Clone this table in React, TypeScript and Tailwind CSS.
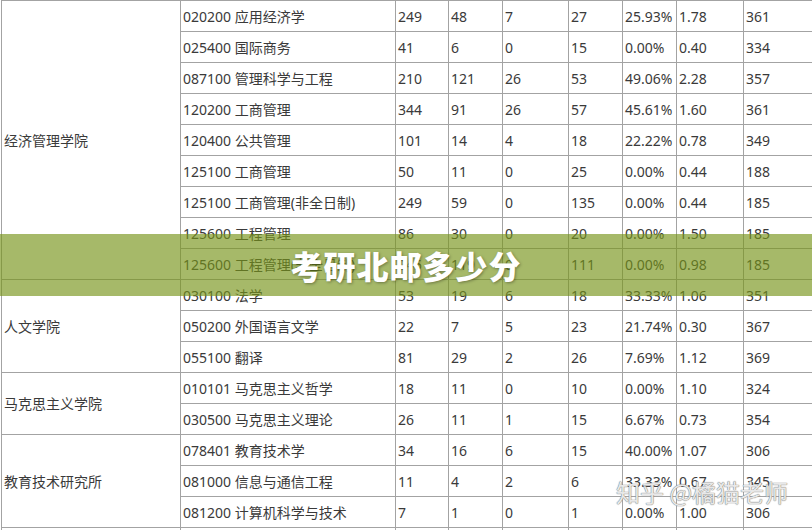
const rows: { group?: [string, number]; name: string; v: string[] }[] = [
  { group: ["经济管理学院", 9], name: "020200 应用经济学", v: ["249", "48", "7", "27", "25.93%", "1.78", "361"] },
  { name: "025400 国际商务", v: ["41", "6", "0", "15", "0.00%", "0.40", "334"] },
  { name: "087100 管理科学与工程", v: ["210", "121", "26", "53", "49.06%", "2.28", "357"] },
  { name: "120200 工商管理", v: ["344", "91", "26", "57", "45.61%", "1.60", "361"] },
  { name: "120400 公共管理", v: ["101", "14", "4", "18", "22.22%", "0.78", "349"] },
  { name: "125100 工商管理", v: ["50", "11", "0", "25", "0.00%", "0.44", "188"] },
  { name: "125100 工商管理(非全日制)", v: ["249", "59", "0", "135", "0.00%", "0.44", "185"] },
  { name: "125600 工程管理", v: ["86", "30", "0", "20", "0.00%", "1.50", "185"] },
  { name: "125600 工程管理(非全日制)", v: ["245", "119", "0", "111", "0.00%", "0.98", "185"] },
  { group: ["人文学院", 3], name: "030100 法学", v: ["53", "19", "6", "18", "33.33%", "1.06", "351"] },
  { name: "050200 外国语言文学", v: ["22", "7", "5", "23", "21.74%", "0.30", "367"] },
  { name: "055100 翻译", v: ["81", "29", "2", "26", "7.69%", "1.12", "369"] },
  { group: ["马克思主义学院", 2], name: "010101 马克思主义哲学", v: ["18", "11", "0", "10", "0.00%", "1.10", "324"] },
  { name: "030500 马克思主义理论", v: ["26", "11", "1", "15", "6.67%", "0.73", "354"] },
  { group: ["教育技术研究所", 3], name: "078401 教育技术学", v: ["34", "16", "6", "15", "40.00%", "1.07", "306"] },
  { name: "081000 信息与通信工程", v: ["11", "4", "2", "6", "33.33%", "0.67", "345"] },
  { name: "081200 计算机科学与技术", v: ["7", "1", "0", "1", "0.00%", "1.00", "306"] },
  { group: ["", 1], name: "", v: ["", "", "", "", "", "", ""] },
];

const spans: Record<number, string> = {
  1: "row-span-1",
  2: "row-span-2",
  3: "row-span-3",
  9: "row-span-9",
};

export default function App() {
  return (
    <div
      className="relative w-[812px] h-[530px] overflow-hidden bg-white text-[#3a3a3a] text-[14px]"
      style={{ fontFamily: '"Noto Sans", "Noto Sans CJK SC", sans-serif' }}
    >
      {/* table */}
      <div className="ml-px pl-px pt-px grid gap-px bg-[#a3a3a3] w-max grid-cols-[178px_214px_52px_53px_65px_53px_53px_66px_80px] auto-rows-[30px]">
        {rows.map((r, i) => (
          <Row key={i} r={r} />
        ))}
      </div>

      {/* banner */}
      <div className="absolute left-0 top-[234px] w-full h-[62px] bg-[#769319]/65 flex items-center justify-center">
        <span
          className="text-white text-[32px] font-black tracking-[1px] [text-shadow:1px_1px_3px_rgba(0,0,0,0.35)]"
          style={{ fontFamily: '"Noto Sans CJK SC", sans-serif' }}
        >
          考研北邮多少分
        </span>
      </div>

      {/* watermark */}
      <div
        className="absolute left-[616px] top-[474px] text-[24px] text-[#e8e8e8] whitespace-nowrap [text-shadow:0_0_1px_#777,0_0_1px_#777]"
        style={{ fontFamily: '"Noto Sans CJK SC", sans-serif' }}
      >
        知乎 @橘猫老师
      </div>
    </div>
  );
}

function Row({ r }: { r: (typeof rows)[number] }) {
  return (
    <>
      {r.group && (
        <div className={`bg-white flex items-center pl-[2px] ${spans[r.group[1]]}`}>{r.group[0]}</div>
      )}
      <div className="bg-white flex items-center pl-[2px] whitespace-nowrap">{r.name}</div>
      {r.v.map((x, j) => (
        <div key={j} className="bg-white flex items-center pl-[2px] whitespace-nowrap">
          {x}
        </div>
      ))}
    </>
  );
}
